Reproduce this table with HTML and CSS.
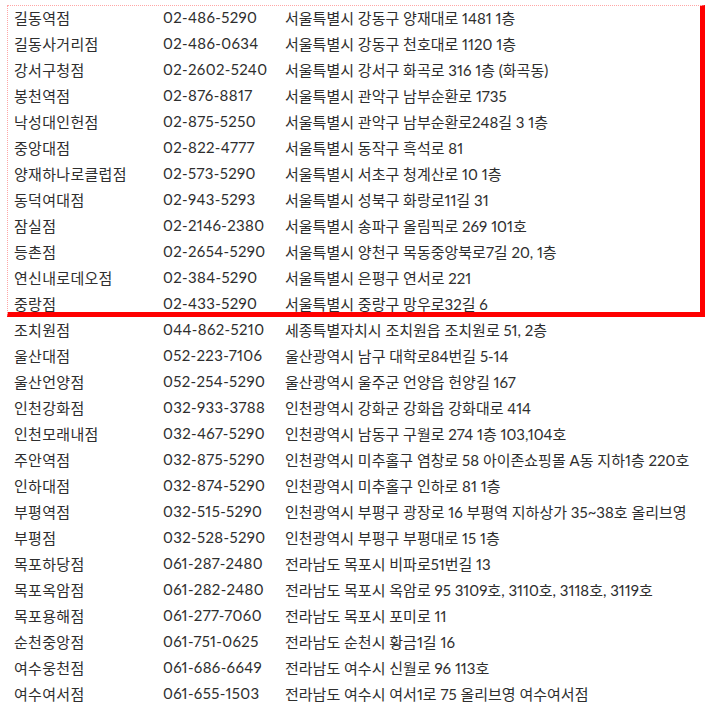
FILE: index.html
```html
<!DOCTYPE html>
<html lang="ko">
<head>
<meta charset="utf-8">
<link rel="stylesheet" href="styles.css">
</head>
<body>
<div class="page">
  <div class="highlight"></div>
  <div class="list">
    <div class="row"><span class="name">길동역점</span><span class="tel">02-486-5290</span><span class="addr">서울특별시 강동구 양재대로 1481 1층</span></div>
    <div class="row"><span class="name">길동사거리점</span><span class="tel">02-486-0634</span><span class="addr">서울특별시 강동구 천호대로 1120 1층</span></div>
    <div class="row"><span class="name">강서구청점</span><span class="tel">02-2602-5240</span><span class="addr">서울특별시 강서구 화곡로 316 1층 (화곡동)</span></div>
    <div class="row"><span class="name">봉천역점</span><span class="tel">02-876-8817</span><span class="addr">서울특별시 관악구 남부순환로 1735</span></div>
    <div class="row"><span class="name">낙성대인헌점</span><span class="tel">02-875-5250</span><span class="addr">서울특별시 관악구 남부순환로248길 3 1층</span></div>
    <div class="row"><span class="name">중앙대점</span><span class="tel">02-822-4777</span><span class="addr">서울특별시 동작구 흑석로 81</span></div>
    <div class="row"><span class="name">양재하나로클럽점</span><span class="tel">02-573-5290</span><span class="addr">서울특별시 서초구 청계산로 10 1층</span></div>
    <div class="row"><span class="name">동덕여대점</span><span class="tel">02-943-5293</span><span class="addr">서울특별시 성북구 화랑로11길 31</span></div>
    <div class="row"><span class="name">잠실점</span><span class="tel">02-2146-2380</span><span class="addr">서울특별시 송파구 올림픽로 269 101호</span></div>
    <div class="row"><span class="name">등촌점</span><span class="tel">02-2654-5290</span><span class="addr">서울특별시 양천구 목동중앙북로7길 20, 1층</span></div>
    <div class="row"><span class="name">연신내로데오점</span><span class="tel">02-384-5290</span><span class="addr">서울특별시 은평구 연서로 221</span></div>
    <div class="row"><span class="name">중랑점</span><span class="tel">02-433-5290</span><span class="addr">서울특별시 중랑구 망우로32길 6</span></div>
    <div class="row"><span class="name">조치원점</span><span class="tel">044-862-5210</span><span class="addr">세종특별자치시 조치원읍 조치원로 51, 2층</span></div>
    <div class="row"><span class="name">울산대점</span><span class="tel">052-223-7106</span><span class="addr">울산광역시 남구 대학로84번길 5-14</span></div>
    <div class="row"><span class="name">울산언양점</span><span class="tel">052-254-5290</span><span class="addr">울산광역시 울주군 언양읍 헌양길 167</span></div>
    <div class="row"><span class="name">인천강화점</span><span class="tel">032-933-3788</span><span class="addr">인천광역시 강화군 강화읍 강화대로 414</span></div>
    <div class="row"><span class="name">인천모래내점</span><span class="tel">032-467-5290</span><span class="addr">인천광역시 남동구 구월로 274 1층 103,104호</span></div>
    <div class="row"><span class="name">주안역점</span><span class="tel">032-875-5290</span><span class="addr">인천광역시 미추홀구 염창로 58 아이존쇼핑몰 A동 지하1층 220호</span></div>
    <div class="row"><span class="name">인하대점</span><span class="tel">032-874-5290</span><span class="addr">인천광역시 미추홀구 인하로 81 1층</span></div>
    <div class="row"><span class="name">부평역점</span><span class="tel">032-515-5290</span><span class="addr">인천광역시 부평구 광장로 16 부평역 지하상가 35~38호 올리브영</span></div>
    <div class="row"><span class="name">부평점</span><span class="tel">032-528-5290</span><span class="addr">인천광역시 부평구 부평대로 15 1층</span></div>
    <div class="row"><span class="name">목포하당점</span><span class="tel">061-287-2480</span><span class="addr">전라남도 목포시 비파로51번길 13</span></div>
    <div class="row"><span class="name">목포옥암점</span><span class="tel">061-282-2480</span><span class="addr">전라남도 목포시 옥암로 95 3109호, 3110호, 3118호, 3119호</span></div>
    <div class="row"><span class="name">목포용해점</span><span class="tel">061-277-7060</span><span class="addr">전라남도 목포시 포미로 11</span></div>
    <div class="row"><span class="name">순천중앙점</span><span class="tel">061-751-0625</span><span class="addr">전라남도 순천시 황금1길 16</span></div>
    <div class="row"><span class="name">여수웅천점</span><span class="tel">061-686-6649</span><span class="addr">전라남도 여수시 신월로 96 113호</span></div>
    <div class="row"><span class="name">여수여서점</span><span class="tel">061-655-1503</span><span class="addr">전라남도 여수시 여서1로 75 올리브영 여수여서점</span></div>
  </div>
</div>
</body>
</html>
```
FILE: styles.css
```css
html, body {
  margin: 0;
  padding: 0;
  background: #ffffff;
}

.page {
  position: relative;
  width: 727px;
  height: 711px;
  overflow: hidden;
  font-family: Lato, "Noto Sans CJK KR", sans-serif;
  font-size: 15px;
  color: #2e2e2e;
  font-variant-numeric: proportional-nums;
}

.list {
  display: flex;
  flex-direction: column;
  padding-top: 4px;
}

.row {
  display: grid;
  grid-template-columns: 149px 122px 1fr;
  height: 26px;
  align-items: center;
  padding-left: 14px;
  white-space: nowrap;
}

.name {
  letter-spacing: 0.3px;
}

.tel {
  letter-spacing: 0.35px;
}

.addr {
  letter-spacing: 0;
}

.highlight {
  position: absolute;
  left: 7px;
  top: 5px;
  width: 692px;
  height: 306px;
  border-top: 1px dotted rgba(255, 60, 60, 0.45);
  border-left: 1px dotted rgba(255, 60, 60, 0.45);
  border-right: 5px solid #ff0000;
  border-bottom: 5px solid #ff0000;
  pointer-events: none;
}
```
